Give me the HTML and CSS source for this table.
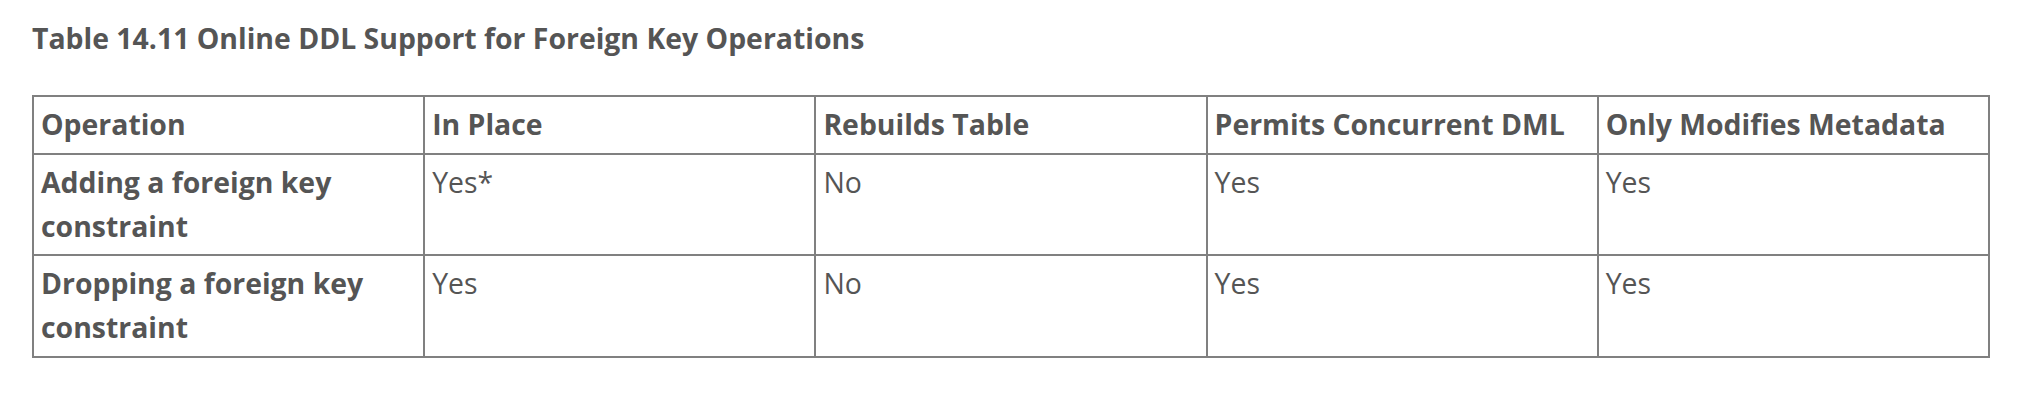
FILE: index.html
```html
<!DOCTYPE html>
<html>
<head>
<meta charset="utf-8">
<link rel="stylesheet" href="styles.css">
</head>
<body>
<div class="page">
  <p class="title">Table 14.11 Online DDL Support for Foreign Key Operations</p>
  <table class="ddl">
    <thead>
      <tr>
        <th>Operation</th>
        <th>In Place</th>
        <th>Rebuilds Table</th>
        <th>Permits Concurrent DML</th>
        <th>Only Modifies Metadata</th>
      </tr>
    </thead>
    <tbody>
      <tr>
        <th>Adding a foreign key constraint</th>
        <td>Yes*</td>
        <td>No</td>
        <td>Yes</td>
        <td>Yes</td>
      </tr>
      <tr>
        <th>Dropping a foreign key constraint</th>
        <td>Yes</td>
        <td>No</td>
        <td>Yes</td>
        <td>Yes</td>
      </tr>
    </tbody>
  </table>
</div>
</body>
</html>
```

FILE: styles.css
```css
html, body {
  margin: 0;
  padding: 0;
  background: #ffffff;
}

.page {
  padding: 16px 44px 0 32px;
  font-family: "Open Sans", "Liberation Sans", sans-serif;
  color: #555555;
  font-size: 28.4px;
  line-height: 44px;
}

.title {
  margin: 0 0 35px 0;
  font-weight: 700;
}

.ddl {
  width: 100%;
  border-collapse: collapse;
  table-layout: fixed;
}

.ddl th,
.ddl td {
  border: 2px solid #808080;
  padding: 5px 7px 6.7px 7px;
  text-align: left;
  vertical-align: top;
}

.ddl th {
  font-weight: 700;
}

.ddl td {
  font-weight: 400;
}
```
